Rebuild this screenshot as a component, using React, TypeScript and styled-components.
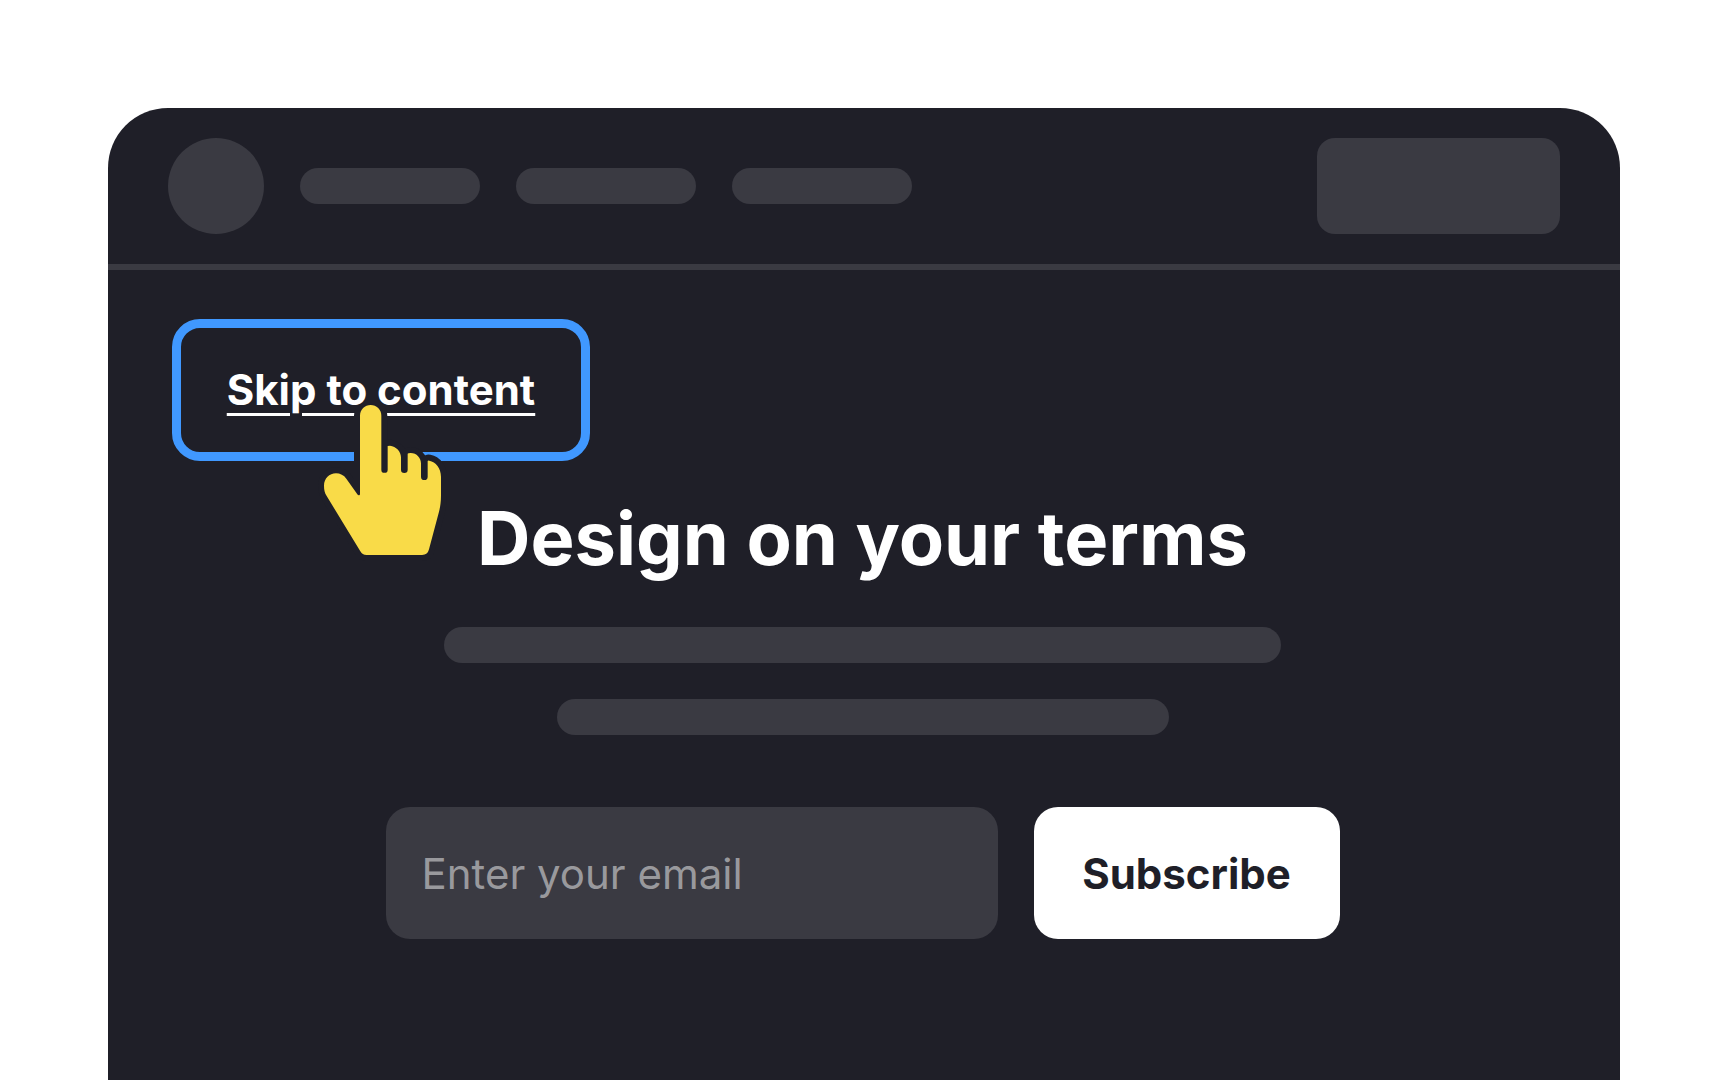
import React from "react";
import styled, { createGlobalStyle } from "styled-components";

const colors = {
  panel: "#1f1f28",
  block: "#3a3a42",
  focus: "#4098ff",
  hand: "#f9db48",
  placeholder: "#99999d",
};

const GlobalStyle = createGlobalStyle`
  *, *::before, *::after { box-sizing: border-box; }
  body {
    margin: 0;
    background: #fff;
    font-family: Inter, "Liberation Sans", sans-serif;
  }
`;

const Page = styled.div`
  display: flex;
  flex-direction: column;
  min-height: 100vh;
  padding: 108px 108px 0;
`;

const Panel = styled.div`
  flex: 1;
  background: ${colors.panel};
  border-radius: 60px 60px 0 0;
`;

const Header = styled.header`
  display: flex;
  align-items: center;
  gap: 36px;
  padding: 30px 60px;
  border-bottom: 6px solid ${colors.block};
`;

const Logo = styled.div`
  width: 96px;
  height: 96px;
  border-radius: 50%;
  background: ${colors.block};
`;

const Nav = styled.nav`
  display: flex;
  flex: 1;
  gap: 36px;
`;

const Bar = styled.div<{ $width: number }>`
  width: ${(p) => p.$width}px;
  max-width: 100%;
  height: 36px;
  border-radius: 18px;
  background: ${colors.block};
`;

const HeaderAction = styled.div`
  width: 243px;
  height: 96px;
  border-radius: 18px;
  background: ${colors.block};
`;

const Main = styled.main`
  padding: 49px 67px 48px 64px;
`;

const SkipArea = styled.div`
  position: relative;
  width: fit-content;
`;

const SkipLink = styled.a`
  display: block;
  min-width: 418px;
  padding: 36px 44px;
  border: 9px solid ${colors.focus};
  border-radius: 28px;
  color: #fff;
  font-size: 42px;
  font-weight: 700;
  line-height: 52px;
  text-align: center;
  text-decoration: underline;
  text-decoration-thickness: 3px;
  text-underline-offset: 8px;
`;

const Pointer = styled.svg`
  position: absolute;
  left: 128px;
  top: 61px;
  width: 180px;
  height: 190px;
  pointer-events: none;
`;

const Hero = styled.section`
  display: flex;
  flex-direction: column;
  align-items: center;
  gap: 36px;
  padding-top: 28px;
`;

const Title = styled.h1`
  margin: 0;
  padding-bottom: 3px;
  color: #fff;
  font-size: 74px;
  font-weight: 700;
  line-height: 99px;
  text-align: center;
`;

const Form = styled.form`
  display: flex;
  gap: 36px;
  width: 954px;
  max-width: 100%;
  margin-top: 36px;
`;

const EmailInput = styled.input`
  flex: 1;
  min-width: 0;
  height: 132px;
  padding: 0 36px;
  border: 0;
  border-radius: 24px;
  background: ${colors.block};
  color: #fff;
  font-family: inherit;
  font-size: 42px;
  font-weight: 400;

  &::placeholder {
    color: ${colors.placeholder};
    opacity: 1;
  }
`;

const SubscribeButton = styled.button`
  flex: 0 0 306px;
  height: 132px;
  padding: 0;
  border: 0;
  border-radius: 24px;
  background: #fff;
  color: ${colors.panel};
  font-family: inherit;
  font-size: 42px;
  font-weight: 700;
`;

const handPath =
  "M180 107 a32 32 0 0 1 64 0 V269 a9.5 9.5 0 0 0 19 0 V198 Q263 197 270 197 C288 199 303 214 303 232 V269 a10 10 0 0 0 20 0 V221 Q323 219 332 219 C350 219 363 234 363 250 V290 a10 10 0 0 0 20 0 V243 Q383 241 388 242 C407 246 423 264 423 290 V347 C423 368 420 383 417 395 L387 508 C384 519 378 525 366 525 H200 C190 525 186 522 181 514 L80 348 C74 338 72 330 72 317 C72 296 88 280 108 280 C120 280 132 286 139 296 L172 343 C174 347 180 347 180 342 Z";

function HandPointer() {
  return (
    <Pointer viewBox="0 0 540 570" aria-hidden="true">
      <clipPath id="below-text">
        <rect x="0" y="80" width="540" height="490" />
      </clipPath>
      <path
        d={handPath}
        fill={colors.panel}
        stroke={colors.panel}
        strokeWidth="36"
        clipPath="url(#below-text)"
      />
      <path d={handPath} fill={colors.hand} />
    </Pointer>
  );
}

export default function App() {
  return (
    <>
      <GlobalStyle />
      <Page>
        <Panel>
          <Header>
            <Logo />
            <Nav>
              <Bar $width={180} />
              <Bar $width={180} />
              <Bar $width={180} />
            </Nav>
            <HeaderAction />
          </Header>
          <Main>
            <SkipArea>
              <SkipLink href="#content">Skip to content</SkipLink>
              <HandPointer />
            </SkipArea>
            <Hero id="content">
              <Title>Design on your terms</Title>
              <Bar $width={837} />
              <Bar $width={612} />
              <Form onSubmit={(e) => e.preventDefault()}>
                <EmailInput
                  type="email"
                  aria-label="Email"
                  placeholder="Enter your email"
                />
                <SubscribeButton type="submit">Subscribe</SubscribeButton>
              </Form>
            </Hero>
          </Main>
        </Panel>
      </Page>
    </>
  );
}
